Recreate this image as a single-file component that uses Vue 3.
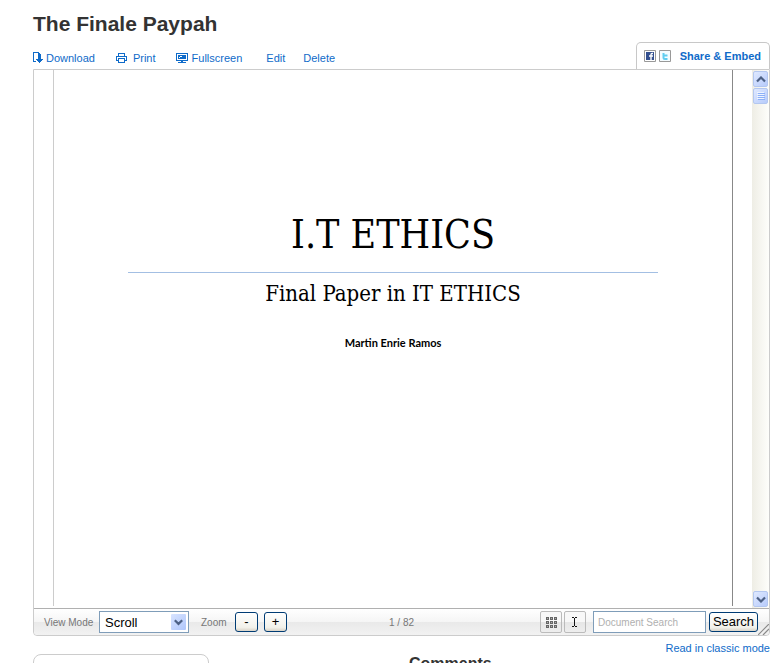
<script setup>
import { ref } from 'vue'

const page = ref(1)
const total = 82
const mode = ref('Scroll')
const query = ref('')
</script>

<template>
  <main class="screen">
    <h1 class="title">The Finale Paypah</h1>

    <div class="topbar">
      <nav class="actions">
        <a href="#download" class="action">
          <svg width="10" height="12" viewBox="0 0 10 12" shape-rendering="crispEdges">
            <path d="M3 9.500H.5V.5H5.500L7.500 2.500V4" fill="none" stroke="#0f6bc9" />
            <path d="M5 1h1v1h1v1h1v1H5z" fill="#0f6bc9" />
            <path d="M5 4h3v3h2v1H9v1H8v1H7v1H6v-1H5V9H4V8H3V7h2z" fill="#0f6bc9" />
          </svg>
          <span>Download</span>
        </a>
        <a href="#print" class="action print">
          <svg width="11" height="12" viewBox="0 0 11 12" shape-rendering="crispEdges">
            <path d="M2.500 4V1.500h6V4M2.500 8.500h-2v-4h10v4h-2M2.500 6.500h6v4h-6z" fill="none" stroke="#0f6bc9" />
          </svg>
          <span>Print</span>
        </a>
        <a href="#fullscreen" class="action full">
          <svg width="12" height="12" viewBox="0 0 12 12" shape-rendering="crispEdges">
            <path d="M.5 1.500h11v7H.5z" fill="none" stroke="#0f6bc9" />
            <path d="M2 3h8v4H2zM5 9h2v1h3v1H2v-1h3z" fill="#0f6bc9" />
            <path d="M4 4h2v1H4zM3 5h1v1H3z" fill="#fff" />
          </svg>
          <span>Fullscreen</span>
        </a>
        <a href="#edit" class="action edit">Edit</a>
        <a href="#delete" class="action delete">Delete</a>
      </nav>
      <a href="#share" class="share">
        <svg width="12" height="12" viewBox="0 0 12 12">
          <path d="M.5 .5h11v11H.5z" fill="#fff" stroke="#999" />
          <path d="M2 2h8v8H2z" fill="#34508f" />
          <path d="M9 3.500H8Q7 3.500 7 4.500V10M5 6h4" fill="none" stroke="#fff" stroke-width="1.400" />
        </svg>
        <svg width="12" height="12" viewBox="0 0 12 12">
          <path d="M.5 .5h11v11H.5z" fill="#f4fcff" stroke="#999" />
          <path d="M4.500 3v4.500Q4.500 9 6 9h2.500M4.500 5.500h4" fill="none" stroke="#5fcdf0" stroke-width="2" />
        </svg>
        <span>Share &amp; Embed</span>
      </a>
    </div>

    <section class="viewer">
      <div class="stage">
        <article class="paper">
          <h2>I.T ETHICS</h2>
          <p class="subtitle">Final Paper in IT ETHICS</p>
          <p class="author">Martin Enrie Ramos</p>
        </article>
        <div class="scrollbar">
          <button class="sb" aria-label="Scroll up">
            <svg width="10" height="7" viewBox="0 0 10 7"><path d="M1 5.500L5 1.500L9 5.500" fill="none" stroke="#4d6185" stroke-width="2.200" /></svg>
          </button>
          <button class="sb thumb" aria-label="Scroll position">
            <svg width="8" height="8" viewBox="0 0 8 8" shape-rendering="crispEdges"><path d="M0 .5h7M0 2.500h7M0 4.500h7M0 6.500h7" stroke="#eef4fe" /><path d="M1 1.500h7M1 3.500h7M1 5.500h7M1 7.500h7" stroke="#8cb0f8" /></svg>
          </button>
          <button class="sb down" aria-label="Scroll down">
            <svg width="10" height="7" viewBox="0 0 10 7"><path d="M1 1.500L5 5.500L9 1.500" fill="none" stroke="#4d6185" stroke-width="2.200" /></svg>
          </button>
        </div>
      </div>

      <div class="controls">
        <label for="mode" class="small">View Mode</label>
        <div class="select">
          <select id="mode" v-model="mode">
            <option>Scroll</option>
            <option>Book</option>
          </select>
          <span class="arrow">
            <svg width="9" height="7" viewBox="0 0 9 7"><path d="M.8 1.200L4.500 4.900L8.200 1.200" fill="none" stroke="#4d6185" stroke-width="2.200" /></svg>
          </span>
        </div>
        <span class="small zoom">Zoom</span>
        <button class="xp" aria-label="Zoom out">-</button>
        <button class="xp plus" aria-label="Zoom in">+</button>
        <span class="small count">{{ page }} / {{ total }}</span>
        <button class="tool" aria-label="Thumbnails">
          <svg width="11" height="11" viewBox="0 0 11 11" shape-rendering="crispEdges">
            <g v-for="r in 3" :key="r">
              <rect v-for="c in 3" :key="c" :x="c * 4 - 3.5" :y="r * 4 - 3.5" width="2" height="2" fill="#aaa" stroke="#666" />
            </g>
          </svg>
        </button>
        <button class="tool" aria-label="Select text">
          <svg width="6" height="10" viewBox="0 0 6 10" shape-rendering="crispEdges"><path d="M0 0h2v1H0zM3 0h2v1H3zM2 1h1v8H2zM0 9h2v1H0zM3 9h2v1H3z" fill="#111" /></svg>
        </button>
        <form class="search" @submit.prevent>
          <input v-model="query" type="text" aria-label="Document Search" placeholder="Document Search">
          <button class="xp submit">Search</button>
        </form>
        <svg class="grip" width="11" height="11" viewBox="0 0 11 11"><path d="M0 11L11 0M5 11L11 5" stroke="#888" stroke-width="1.200" /></svg>
      </div>
    </section>

    <div class="classic"><a href="#classic">Read in classic mode</a></div>

    <div class="below">
      <aside class="card"></aside>
      <h3>Comments</h3>
    </div>
  </main>
</template>

<style>
body {
  margin: 0;
  background: #fff;
}
</style>

<style scoped>
* {
  box-sizing: border-box;
}
.screen {
  height: 100vh;
  overflow: hidden;
  padding: 12px 8px 0 33px;
  font-family: "Liberation Sans", Arial, sans-serif;
  font-size: 11px;
}
h1, h2, h3, p {
  margin: 0;
}
a {
  color: #0f6bc9;
  text-decoration: none;
}
button, input, select {
  font-family: inherit;
  margin: 0;
  padding: 0;
}
svg {
  display: block;
  flex: none;
}
.title {
  font-size: 21px;
  line-height: 24px;
  color: #333;
}
.topbar {
  display: flex;
  justify-content: space-between;
  align-items: flex-end;
  padding-top: 6px;
}
.actions {
  display: flex;
  height: 23px;
}
.action {
  display: flex;
  gap: 3px;
  align-items: center;
}
.print {
  margin-left: 21px;
  gap: 6px;
}
.full {
  margin-left: 20px;
  gap: 4px;
}
.edit {
  margin-left: 24px;
}
.delete {
  margin-left: 18px;
}
.share {
  display: flex;
  align-items: center;
  gap: 3px;
  height: 27px;
  padding: 0 8px 0 7px;
  border: 1px solid #c8c8c8;
  border-bottom: 0;
  border-radius: 5px 5px 0 0;
  font-weight: bold;
}
.share span {
  margin-left: 6px;
}
.viewer {
  border: 1px solid #ccc;
  border-radius: 0 0 4px 4px;
}
.stage {
  display: flex;
  justify-content: space-between;
}
.paper {
  flex: 1;
  margin: 0 19px 2px;
  padding: 140px 74px 254px;
  border-left: 1px solid #ccc;
  border-right: 1px solid #888;
  text-align: center;
  color: #000;
}
.paper h2 {
  padding-bottom: 12px;
  border-bottom: 1px solid #a3bfe3;
  font: 39px/50px "DejaVu Serif Condensed", "DejaVu Serif", serif;
}
.subtitle {
  padding-top: 6px;
  font: 22px/30px "DejaVu Serif Condensed", "DejaVu Serif", serif;
}
.author {
  padding-top: 26px;
  padding-bottom: 1px;
  font: bold 11px/16px "Lato", sans-serif;
}
.scrollbar {
  display: flex;
  flex-direction: column;
  width: 17px;
  padding: 1px;
  gap: 1px;
  background: linear-gradient(90deg, #eeede5, #fefefb);
}
.sb {
  display: grid;
  place-items: center;
  width: 15px;
  height: 16px;
  border: 1px solid #b3c7f0;
  border-radius: 2px;
  background: linear-gradient(135deg, #dfe9ff, #b7cbfb);
}
.down {
  margin-top: auto;
}
.controls {
  display: flex;
  align-items: center;
  height: 27px;
  border-top: 1px solid #b0b0b0;
  border-radius: 0 0 4px 4px;
  background: linear-gradient(#fff, #f5f5f5 50%, #e9e9e9 51%, #f2f2f2);
  padding-left: 10px;
}
.small {
  font-size: 10px;
  color: #777;
}
.controls label {
  width: 55px;
}
.select {
  position: relative;
}
select {
  display: block;
  width: 90px;
  height: 22px;
  padding-left: 5px;
  appearance: none;
  border: 1px solid #7f9db9;
  border-radius: 0;
  background: #fff;
  color: #000;
  font-size: 13px;
}
.arrow {
  position: absolute;
  top: 3px;
  right: 3px;
  display: grid;
  place-items: center;
  width: 15px;
  height: 16px;
  border-radius: 1px;
  background: linear-gradient(135deg, #d8e4ff, #afc6fb);
  pointer-events: none;
}
.zoom {
  width: 34px;
  margin-left: 12px;
}
.xp {
  width: 23px;
  height: 20px;
  border: 1px solid #003c74;
  border-radius: 3px;
  background: linear-gradient(#fff, #f2f1ea 80%, #d9d3c8);
  color: #000;
  font-size: 13px;
  line-height: 16px;
}
.plus {
  margin-left: 6px;
}
.count {
  flex: 1;
  margin-left: 102px;
}
.tool {
  display: grid;
  place-items: center;
  width: 22px;
  height: 22px;
  margin-right: 2px;
  border: 1px solid #bbb;
  border-radius: 2px;
  background: linear-gradient(#f8f8f8 50%, #e6e6e6 51%, #eee);
}
.search {
  display: flex;
  align-items: center;
  gap: 3px;
  margin-left: 5px;
}
.search input {
  width: 113px;
  height: 22px;
  padding: 0 4px;
  border: 1px solid #7f9db9;
  background: #fff;
  font-size: 10px;
}
.search input::placeholder {
  color: #b0b0b0;
  opacity: 1;
}
.submit {
  width: 49px;
}
.grip {
  align-self: flex-end;
}
.classic {
  padding-top: 6px;
  line-height: 12px;
  text-align: right;
}
.below {
  display: flex;
  align-items: flex-start;
  gap: 200px;
}
.card {
  width: 176px;
  height: 60px;
  border: 1px solid #ccc;
  border-radius: 8px;
}
.below h3 {
  padding-top: 1px;
  font-size: 16px;
  line-height: 18px;
  color: #333;
}
</style>
